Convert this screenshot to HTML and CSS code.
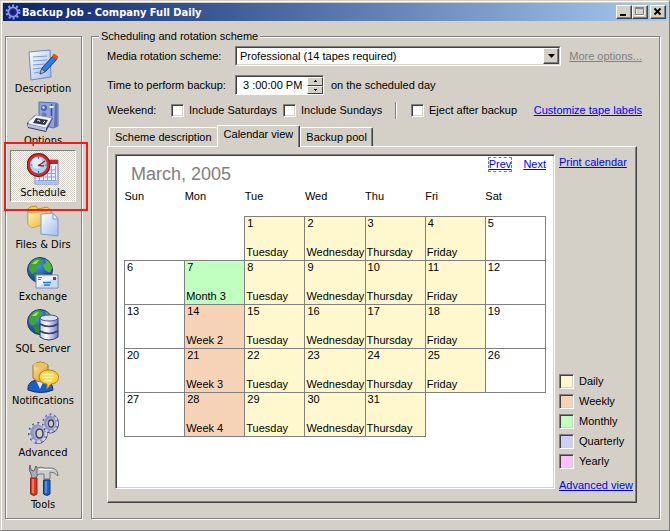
FILE: index.html
```
<!DOCTYPE html>
<html lang="en">

<head>
    <meta charset="UTF-8">
    <meta name="viewport" content="width=device-width, initial-scale=1.0">
    <title>Backup Job - Company Full Daily</title>
    <link rel="stylesheet" href="styles.css">
</head>

<body>
    <div class="window">
        <header class="titlebar">
            <svg class="app-icon" width="16" height="16" viewBox="0 0 16 16">
                <circle cx="8" cy="8" r="6.5" fill="none" stroke="#10185a" stroke-width="3" stroke-dasharray="2 2"/>
                <circle cx="8" cy="8" r="6.3" fill="none" stroke="#8c94ee" stroke-width="2.4" stroke-dasharray="2 2"/>
                <circle cx="8" cy="8" r="4.5" fill="none" stroke="#8c94ee" stroke-width="2"/>
                <circle cx="8" cy="8" r="3.2" fill="#0a246a" stroke="#29309c"/>
            </svg>
            <h1>Backup Job - Company Full Daily</h1>
            <div class="window-buttons">
                <button type="button" aria-label="Minimize"><svg width="12" height="10" viewBox="0 0 12 10"><path d="M2 7h6v2H2z"/></svg></button>
                <button type="button" aria-label="Maximize" disabled><svg width="12" height="10" viewBox="0 0 12 10"><path d="M2 1.5h8v7H2z" fill="none" stroke="#fff"/><path d="M1.500 .5h8v7h-8zM1 1.500h9" fill="none" stroke="#808080"/></svg></button>
                <button type="button" class="close" aria-label="Close"><svg width="12" height="10" viewBox="0 0 12 10"><path d="M2.500 1.500l6 6m0-6l-6 6" stroke="#000" stroke-width="1.800"/></svg></button>
            </div>
        </header>

        <main class="content">
            <nav class="sidebar">
                <button type="button" class="nav-item">
                    <svg width="32" height="32" viewBox="0 0 32 32">
                        <defs><linearGradient id="paper" x1="0" y1="0" x2="1" y2="1"><stop offset="0" stop-color="#fff"/><stop offset="1" stop-color="#9dbcf0"/></linearGradient></defs>
                        <path d="M2 3l21-2 1 27-20 3z" fill="url(#paper)" stroke="#7187c4"/>
                        <path d="M6 8l14-1M6 12l14-1M6 16l12-1M6 20l8-1M7 24l6-1" stroke="#7a9ade"/>
                        <path d="M13 25l2-6L26 7l4 3-11 12z" fill="#2f7be0" stroke="#153a86"/>
                        <path d="M25 8l2-3 4 3-2 3z" fill="#e8551a" stroke="#b43a10" stroke-width=".7"/>
                        <path d="M13 25l1.500-5 3.500 3z" fill="#e5c090" stroke="#333" stroke-width=".6"/>
                    </svg>
                    <span>Description</span>
                </button>
                <button type="button" class="nav-item">
                    <svg width="32" height="32" viewBox="0 0 32 32">
                        <path d="M12 1l17 1 2 1v22l-5 2-14-4z" fill="#8ea2dc" stroke="#5b6eae"/>
                        <path d="M28 3h2v22l-3 1z" fill="#5f6fb0"/>
                        <circle cx="17" cy="7" r="3" fill="#4c60a8"/>
                        <circle cx="16.500" cy="6.500" r="1.200" fill="#dfe6ff"/>
                        <path d="M24.500 3v12" stroke="#3b4c90" stroke-width="1.500"/>
                        <path d="M22.500 6h4" stroke="#e6ecff" stroke-width="2"/>
                        <circle cx="17" cy="14" r="2.500" fill="#6478bc"/>
                        <path d="M0 22l8-8 18 3-5 10-2 4L1 27z" fill="#35426e"/>
                        <path d="M1 21l8-7 16 3-6 10-17-4z" fill="#f3f5fb" stroke="#8790ac" stroke-width=".6"/>
                        <path d="M1 23l18 4v3L1 26z" fill="#b8c0da"/>
                        <path d="M9 17l12 2-3 5-12-2z" fill="#303744"/>
                        <path d="M10 20l2-1 1 2m3 1l2-2" stroke="#e4e8ee" fill="none"/>
                    </svg>
                    <span>Options</span>
                </button>
                <button type="button" class="nav-item selected" aria-current="page">
                    <svg width="32" height="32" viewBox="0 0 32 32">
                        <path d="M8 7h23v24H8z" fill="#e8eefc" stroke="#6d82c4"/>
                        <path d="M9 27h22v4H9z" fill="#a9c4f4"/>
                        <path d="M20 7h11v4H20z" fill="#c82424"/>
                        <path d="M11 17h17M11 20.500h17M11 24h17M11 27.500h17M12.500 16v12M16.500 16v12M20.500 13v15M24.500 13v15M28.500 13v15" stroke="#8fa2dc"/>
                        <circle cx="11.500" cy="12" r="10" fill="none" stroke="#7c0c0c" stroke-width="3.800"/>
                        <circle cx="11.500" cy="12" r="9.700" fill="#9fd4fa" stroke="#d42a2a" stroke-width="2.400"/>
                        <circle cx="10" cy="10" r="5.500" fill="#d9f0ff"/>
                        <path d="M11.500 4v2M11.500 18v2M3.500 12h2M18 12h2" stroke="#3f6898"/>
                        <path d="M11 13l7-5M11 12.500l6 .5" stroke="#c81414" stroke-width="1.500"/>
                    </svg>
                    <span>Schedule</span>
                </button>
                <button type="button" class="nav-item">
                    <svg width="32" height="32" viewBox="0 0 32 32">
                        <defs><linearGradient id="folder" x1="0" y1="0" x2="1" y2="1"><stop offset="0" stop-color="#fff6b8"/><stop offset="1" stop-color="#e8b030"/></linearGradient></defs>
                        <path d="M1 4l2-2 6-1 2 3 9-2 4 3v12L6 22 1 19z" fill="#f4cf62" stroke="#c1902a"/>
                        <path d="M1 7l5 1 13-2v13L5 23 1 20z" fill="url(#folder)" stroke="#c69b3a" stroke-width=".7"/>
                        <path d="M14 9l12-1 5 6v17l-17-2z" fill="url(#paper)" stroke="#7f98cf"/>
                        <path d="M26 8v6h5z" fill="#fff" stroke="#7f98cf"/>
                    </svg>
                    <span>Files &amp; Dirs</span>
                </button>
                <button type="button" class="nav-item">
                    <svg width="32" height="32" viewBox="0 0 32 32">
                        <defs>
                            <radialGradient id="sea" cx=".4" cy=".3" r=".8"><stop offset="0" stop-color="#4f97e8"/><stop offset="1" stop-color="#0a2a80"/></radialGradient>
                            <g id="globe">
                                <circle cx="13" cy="13" r="12.500" fill="url(#sea)" stroke="#16406e"/>
                                <path d="M2 10Q4 3 11 1l5 3-3 4-4 2 1 4-5 3-3-4z" fill="#3fa52f"/>
                                <path d="M18 2q6 3 7 9l-2 5-5-3-2-5 3-2z" fill="#55b63c"/>
                                <path d="M7 17l6-1 3 4-3 5-5-2z" fill="#2d8c2a"/>
                                <path d="M5 7q3-4 7-4l-3 4z" fill="#9be069"/>
                            </g>
                        </defs>
                        <use href="#globe"/>
                        <path d="M9 18h22v13H9z" fill="#eef4ff" stroke="#7085bd"/>
                        <path d="M10 30h20V20z" fill="#c7daf8"/>
                        <path d="M11 20.500h4M11 22.500h3" stroke="#6a78c0"/>
                        <path d="M16 25.500h8M17 28h6" stroke="#2878c8" stroke-width="1.300"/>
                        <path d="M26 20h3v3h-3z" fill="#d01c1c"/>
                    </svg>
                    <span>Exchange</span>
                </button>
                <button type="button" class="nav-item">
                    <svg width="32" height="32" viewBox="0 0 32 32">
                        <defs><linearGradient id="disk"><stop offset="0" stop-color="#b9c0ee"/><stop offset=".35" stop-color="#fff"/><stop offset="1" stop-color="#7078c0"/></linearGradient></defs>
                        <use href="#globe"/>
                        <path d="M13 9v19q9 6 18 0V9z" fill="url(#disk)" stroke="#343a78"/>
                        <ellipse cx="22" cy="9" rx="9" ry="3" fill="#dde1fb" stroke="#4c5494"/>
                        <path d="M13 15q9 5 18 0M13 22q9 5 18 0" fill="none" stroke="#343a78" stroke-width="1.500"/>
                    </svg>
                    <span>SQL Server</span>
                </button>
                <button type="button" class="nav-item">
                    <svg width="32" height="32" viewBox="0 0 32 32">
                        <defs><linearGradient id="gold" x1="0" y1="0" x2="1" y2="1"><stop offset="0" stop-color="#ffeaa0"/><stop offset="1" stop-color="#dc9018"/></linearGradient></defs>
                        <path d="M1 29q-1-8 8-10h8q9 2 9 10-12 5-25 0z" fill="#1b5fc0" stroke="#0b3070"/>
                        <path d="M9 19l4 9 4-9z" fill="#dcebff"/>
                        <path d="M6 4q7-6 15 0v13q-7 8-15 0z" fill="url(#gold)" stroke="#a8701c"/>
                        <ellipse cx="13" cy="4" rx="7" ry="2.500" fill="#ecc268"/>
                        <path d="M21 9c14 0 13 14 3 14l-4 5v-5c-11-1-10-14 1-14z" fill="#ffd33c" stroke="#b87a10"/>
                        <path d="M15 13.500h12M15 16.500h12M17 19.500h8" stroke="#fff7c8" stroke-width="1.300"/>
                    </svg>
                    <span>Notifications</span>
                </button>
                <button type="button" class="nav-item">
                    <svg width="32" height="32" viewBox="0 0 32 32">
                        <ellipse cx="11" cy="20" rx="9.500" ry="10.500" fill="#9096b8" stroke="#3d4160"/>
                        <ellipse cx="10.500" cy="19.500" rx="8.500" ry="9.500" fill="none" stroke="#d3d6ea" stroke-width="3" stroke-dasharray="3.500 2"/>
                        <ellipse cx="12" cy="20" rx="6" ry="7" fill="#a9aecb"/>
                        <ellipse cx="12.500" cy="20.500" rx="3.500" ry="4.500" fill="#d4d0c8" stroke="#3d4160" stroke-width="1.500"/>
                        <ellipse cx="23.500" cy="10.500" rx="8" ry="9.500" fill="#8e90b8" stroke="#3d4160"/>
                        <ellipse cx="23" cy="10" rx="7" ry="8.500" fill="none" stroke="#c9cbe6" stroke-width="2.500" stroke-dasharray="3 1.700"/>
                        <ellipse cx="24" cy="10.500" rx="5" ry="6" fill="#a4a6cc"/>
                        <ellipse cx="24" cy="10.500" rx="2.500" ry="3.500" fill="#d4d0c8" stroke="#3d4160" stroke-width="1.300"/>
                    </svg>
                    <span>Advanced</span>
                </button>
                <button type="button" class="nav-item">
                    <svg width="32" height="32" viewBox="0 0 32 32">
                        <path d="M3 0l1 5 3 1 2-5q3 3 2 7l-2 6H5L4 9Q1 5 3 0z" fill="#a8acb8" stroke="#60636e"/>
                        <path d="M10 3l4-1 3 1h8q6 1 6 8-3-4-8-4v7h-6V9h-4l-3 1z" fill="#c9cdd0" stroke="#70747a"/>
                        <path d="M12 4.500h13" stroke="#fff"/>
                        <path d="M3.500 13h6.500v16q-3 3-6.500 0z" fill="#d83a24" stroke="#932010"/>
                        <path d="M6 14v14" stroke="#ff9882" stroke-width="1.300"/>
                        <path d="M16.500 15H23v14q-3 3-6.500 0z" fill="#1f63bc" stroke="#0d3672"/>
                        <path d="M19 16v12" stroke="#6aa6ee" stroke-width="1.300"/>
                    </svg>
                    <span>Tools</span>
                </button>
            </nav>

            <fieldset class="scheme">
                <legend>Scheduling and rotation scheme</legend>

                <div class="row row-media">
                    <label class="name" for="rotation">Media rotation scheme:</label>
                    <div class="combo">
                        <select id="rotation">
                            <option>Professional (14 tapes required)</option>
                        </select>
                        <span class="combo-arrow"><svg width="7" height="4" viewBox="0 0 7 4"><path d="M0 0h7L3.500 4z"/></svg></span>
                    </div>
                    <a class="more disabled" href="#">More options...</a>
                </div>

                <div class="row row-time">
                    <label class="name" for="time">Time to perform backup:</label>
                    <div class="spinner">
                        <input type="text" id="time" value="3 :00:00 PM">
                        <div class="spin-buttons">
                            <button type="button" aria-label="Later"><svg width="3" height="2" viewBox="0 0 3 2"><path d="M1 0h1v1h1v1H0V1h1z"/></svg></button>
                            <button type="button" aria-label="Earlier"><svg width="3" height="2" viewBox="0 0 3 2"><path d="M0 0h3v1H2v1H1V1H0z"/></svg></button>
                        </div>
                    </div>
                    <span>on the scheduled day</span>
                </div>

                <div class="row row-weekend">
                    <span class="weekend">Weekend:</span>
                    <label class="check saturdays"><input type="checkbox">Include Saturdays</label>
                    <label class="check sundays"><input type="checkbox">Include Sundays</label>
                    <span class="divider"></span>
                    <label class="check"><input type="checkbox">Eject after backup</label>
                    <a class="customize" href="#">Customize tape labels</a>
                </div>

                <div class="tabs" role="tablist">
                    <button type="button" class="tab" role="tab">Scheme description</button>
                    <button type="button" class="tab active" role="tab" aria-selected="true">Calendar view</button>
                    <button type="button" class="tab" role="tab">Backup pool</button>
                </div>

                <div class="tab-panel" role="tabpanel">
                    <section class="calendar">
                        <div class="calendar-head">
                            <h2>March, 2005</h2>
                            <a class="prev" href="#">Prev</a>
                            <a href="#">Next</a>
                        </div>
                        <table>
                            <thead>
                                <tr><th>Sun</th><th>Mon</th><th>Tue</th><th>Wed</th><th>Thu</th><th>Fri</th><th>Sat</th></tr>
                            </thead>
                            <tbody>
                                <tr>
                                    <td class="blank"></td>
                                    <td class="blank"></td>
                                    <td class="daily"><b>1</b><span>Tuesday</span></td>
                                    <td class="daily"><b>2</b><span>Wednesday</span></td>
                                    <td class="daily"><b>3</b><span>Thursday</span></td>
                                    <td class="daily"><b>4</b><span>Friday</span></td>
                                    <td><b>5</b></td>
                                </tr>
                                <tr>
                                    <td><b>6</b></td>
                                    <td class="monthly"><b>7</b><span>Month 3</span></td>
                                    <td class="daily"><b>8</b><span>Tuesday</span></td>
                                    <td class="daily"><b>9</b><span>Wednesday</span></td>
                                    <td class="daily"><b>10</b><span>Thursday</span></td>
                                    <td class="daily"><b>11</b><span>Friday</span></td>
                                    <td><b>12</b></td>
                                </tr>
                                <tr>
                                    <td><b>13</b></td>
                                    <td class="weekly"><b>14</b><span>Week 2</span></td>
                                    <td class="daily"><b>15</b><span>Tuesday</span></td>
                                    <td class="daily"><b>16</b><span>Wednesday</span></td>
                                    <td class="daily"><b>17</b><span>Thursday</span></td>
                                    <td class="daily"><b>18</b><span>Friday</span></td>
                                    <td><b>19</b></td>
                                </tr>
                                <tr>
                                    <td><b>20</b></td>
                                    <td class="weekly"><b>21</b><span>Week 3</span></td>
                                    <td class="daily"><b>22</b><span>Tuesday</span></td>
                                    <td class="daily"><b>23</b><span>Wednesday</span></td>
                                    <td class="daily"><b>24</b><span>Thursday</span></td>
                                    <td class="daily"><b>25</b><span>Friday</span></td>
                                    <td><b>26</b></td>
                                </tr>
                                <tr>
                                    <td><b>27</b></td>
                                    <td class="weekly"><b>28</b><span>Week 4</span></td>
                                    <td class="daily"><b>29</b><span>Tuesday</span></td>
                                    <td class="daily"><b>30</b><span>Wednesday</span></td>
                                    <td class="daily"><b>31</b><span>Thursday</span></td>
                                    <td class="blank"></td>
                                    <td class="blank"></td>
                                </tr>
                            </tbody>
                        </table>
                    </section>

                    <aside class="side">
                        <a href="#">Print calendar</a>
                        <ul class="key">
                            <li><i class="daily"></i>Daily</li>
                            <li><i class="weekly"></i>Weekly</li>
                            <li><i class="monthly"></i>Monthly</li>
                            <li><i class="quarterly"></i>Quarterly</li>
                            <li><i class="yearly"></i>Yearly</li>
                        </ul>
                        <a class="advanced" href="#">Advanced view</a>
                    </aside>
                </div>
            </fieldset>
        </main>
    </div>
</body>

</html>
```
FILE: styles.css
```
* {
    box-sizing: border-box;
}

body {
    margin: 0;
    background: #d4d0c8;
    color: #000;
    font-family: "Liberation Sans", Arial, sans-serif;
    font-size: 11px;
    line-height: 13px;
}

button,
input,
select {
    font: inherit;
    color: inherit;
    margin: 0;
    padding: 0;
    border-radius: 0;
}

button {
    background: #d4d0c8;
}

a {
    color: #0000ff;
    white-space: nowrap;
}

a.disabled {
    color: #808080;
}

/* window frame */
.window {
    display: flex;
    flex-direction: column;
    min-height: 100vh;
    padding: 1px;
    border: 1px solid;
    border-color: #d4d0c8 #808080 #808080 #d4d0c8;
    box-shadow: inset 1px 1px #fff;
}

.titlebar {
    display: flex;
    align-items: center;
    gap: 1px;
    height: 18px;
    margin: 1px 0 0 1px;
    padding: 0 2px;
    background: linear-gradient(to right, #0a246a, #a6caf0);
    color: #fff;
}

.titlebar h1 {
    flex: 1;
    margin: 0;
    font-family: "DejaVu Sans Condensed", "DejaVu Sans", sans-serif;
    font-size: 11px;
    font-weight: bold;
}

.window-buttons {
    display: flex;
}

.window-buttons button {
    display: flex;
    align-items: center;
    justify-content: center;
    width: 16px;
    height: 14px;
    border: 1px solid;
    border-color: #fff #404040 #404040 #fff;
    box-shadow: inset -1px -1px #808080;
}

.window-buttons .close {
    margin-left: 2px;
}

.content {
    display: flex;
    flex: 1;
    gap: 9px;
    padding: 15px 8px 10px 3px;
}

/* icon list on the left */
.sidebar {
    display: flex;
    flex-direction: column;
    width: 77px;
    padding: 9px 5px 3px 4px;
    border: 1px solid #808080;
    box-shadow: 1px 1px #fff, inset 1px 1px #fff;
}

.nav-item {
    display: flex;
    flex-direction: column;
    align-items: center;
    height: 52px;
    padding: 2px 0 0;
    border: 1px solid transparent;
    background: none;
    font-family: "DejaVu Sans Condensed", "DejaVu Sans", sans-serif;
    white-space: nowrap;
}

.nav-item svg {
    display: block;
    flex: none;
}

.nav-item span {
    padding-top: 1px;
}

.nav-item.selected {
    position: relative;
    border-color: #808080 #fff #fff #808080;
    background: repeating-conic-gradient(#fff 0 25%, #d4d0c8 0 50%) 0 0 / 2px 2px;
}

/* red marker round the current page */
.nav-item.selected::after {
    content: "";
    position: absolute;
    z-index: 1;
    inset: -9px -13px -10px -7px;
    border: 2px solid #f81818;
}

/* settings group */
.scheme {
    display: flex;
    flex: 1;
    flex-direction: column;
    min-width: 0;
    margin: -6px 0 0;
    padding: 3px 17px 15px 15px;
    border: 1px solid #808080;
    box-shadow: 1px 1px #fff, inset 1px 1px #fff;
}

.scheme legend {
    margin-left: -8px;
    padding: 0 2px;
    background: #d4d0c8;
}

.row {
    display: flex;
    align-items: center;
}

.row .name {
    width: 128px;
}

.row-media {
    height: 20px;
}

.combo {
    position: relative;
    flex: 1;
    height: 20px;
    border: 1px solid;
    border-color: #808080 #fff #fff #808080;
}

.combo select {
    display: block;
    width: 100%;
    height: 18px;
    padding: 0 18px 0 3px;
    border: 1px solid;
    border-color: #404040 #d4d0c8 #d4d0c8 #404040;
    background: #fff;
    appearance: none;
}

.combo-arrow {
    position: absolute;
    top: 1px;
    right: 1px;
    bottom: 1px;
    display: flex;
    align-items: center;
    justify-content: center;
    width: 16px;
    border: 1px solid;
    border-color: #fff #404040 #404040 #fff;
    box-shadow: inset -1px -1px #808080;
    background: #d4d0c8;
    pointer-events: none;
}

.more {
    margin-left: 8px;
}

.row-time {
    height: 20px;
    margin-top: 9px;
}

.spinner {
    display: flex;
    width: 89px;
    height: 20px;
    margin-right: 7px;
    border: 1px solid;
    border-color: #808080 #fff #fff #808080;
    box-shadow: inset 1px 1px #404040;
}

.spinner input {
    flex: 1;
    min-width: 0;
    margin: 1px 0 0 1px;
    padding: 0 0 0 6px;
    border: 0;
    background: #fff;
}

.spin-buttons {
    display: flex;
    flex-direction: column;
    width: 16px;
    padding-top: 1px;
}

.spin-buttons button {
    display: flex;
    flex: 1;
    align-items: center;
    justify-content: center;
    min-height: 0;
    border: 1px solid;
    border-color: #fff #404040 #404040 #fff;
}

.row-weekend {
    height: 18px;
    margin-top: 6px;
}

.weekend {
    width: 64px;
}

.check {
    display: flex;
    align-items: center;
    gap: 5px;
    white-space: nowrap;
}

.check input {
    width: 13px;
    height: 13px;
    border: 1px solid;
    border-color: #808080 #fff #fff #808080;
    box-shadow: inset 1px 1px #404040, inset -1px -1px #d4d0c8;
    background: #fff;
    appearance: none;
}

.check input:checked {
    background: #404040;
}

.saturdays,
.sundays {
    width: 112px;
}

.divider {
    width: 2px;
    height: 17px;
    margin-right: 14px;
    border-left: 1px solid #808080;
    border-right: 1px solid #fff;
}

.customize {
    margin-left: auto;
}

/* tabs */
.tabs {
    display: flex;
    align-items: flex-end;
    margin: 6px 0 0 2px;
}

.tab {
    height: 19px;
    padding: 0 5px;
    border: 1px solid;
    border-color: #fff #404040 transparent #fff;
    border-bottom: 0;
    border-radius: 2px 2px 0 0;
    box-shadow: inset -1px 0 #808080;
    white-space: nowrap;
}

.tab:first-child {
    border-right: 0;
    box-shadow: none;
}

.tab.active {
    z-index: 1;
    height: 22px;
    margin-bottom: -1px;
    padding: 0 6px 4px;
}

.tab-panel {
    display: flex;
    flex: 1;
    gap: 4px;
    margin-right: 5px;
    padding: 7px 3px 10px 7px;
    border: 1px solid;
    border-color: #fff #404040 #404040 #fff;
    box-shadow: inset -1px -1px #808080;
}

.calendar {
    flex: 1;
    margin-bottom: 3px;
    padding: 3px 8px 8px;
    border: 1px solid;
    border-color: #808080 #fff #fff #808080;
    box-shadow: inset 1px 1px #404040, inset -1px -1px #d4d0c8;
    background: #fff;
}

.calendar-head {
    display: flex;
    align-items: flex-start;
    gap: 12px;
    padding-left: 7px;
}

.calendar-head h2 {
    flex: 1;
    margin: 0;
    padding-top: 4px;
    color: #808080;
    font-size: 18px;
    font-weight: normal;
    line-height: 24px;
}

.prev {
    outline: 1px dashed #808080;
}

table {
    width: 100%;
    border-collapse: collapse;
    table-layout: fixed;
}

th {
    height: 30px;
    padding: 4px 0 0;
    font-weight: normal;
    text-align: left;
    vertical-align: top;
}

td {
    height: 44px;
    padding: 0 0 0 1px;
    border: 1px solid #808080;
    vertical-align: top;
    white-space: nowrap;
}

td b,
td span {
    display: block;
    font-weight: normal;
}

td b {
    padding-left: 1px;
}

td span {
    margin-top: 16px;
}

td.blank {
    border: 0;
}

.daily {
    background: #fff8ce;
}

.weekly {
    background: #f6d3b6;
}

.monthly {
    background: #c0ffc0;
}

.quarterly {
    background: #ccd0f8;
}

.yearly {
    background: #ffc0ff;
}

/* links and colour key beside the calendar */
.side {
    display: flex;
    flex-direction: column;
    align-items: flex-start;
    width: 74px;
}

.side a {
    margin-top: 2px;
}

.key {
    margin: auto 0 0;
    padding: 0;
    list-style: none;
}

.key li {
    display: flex;
    align-items: center;
    gap: 5px;
    height: 20px;
}

.key i {
    width: 15px;
    height: 15px;
    border: 1px solid;
    border-color: #808080 #fff #fff #808080;
    box-shadow: inset 1px 1px #404040, inset -1px -1px #d4d0c8;
}

.side .advanced {
    margin-top: 8px;
}
```
